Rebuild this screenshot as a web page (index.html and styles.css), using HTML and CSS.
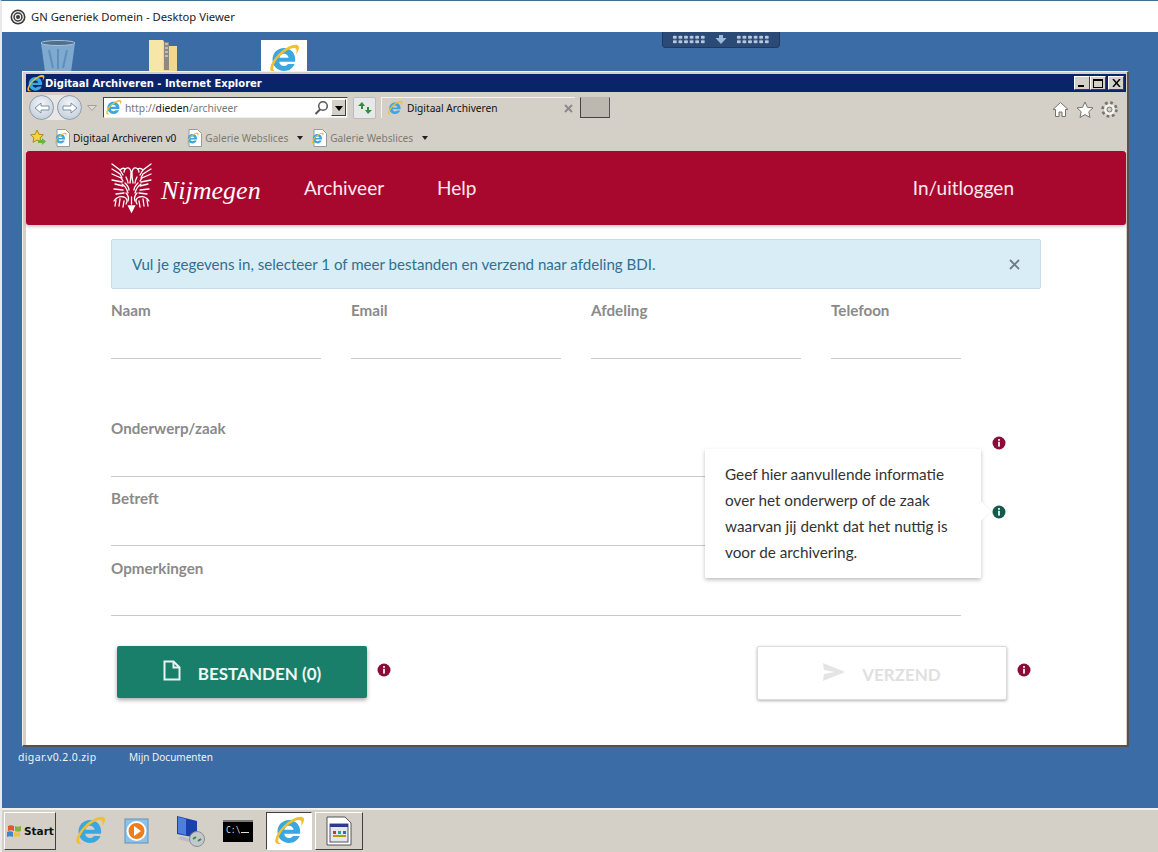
FILE: index.html
```html
<!DOCTYPE html>
<html lang="en">
<head>
    <meta charset="UTF-8">
    <title>GN Generiek Domein - Desktop Viewer</title>
    <link rel="stylesheet" href="styles.css">
</head>
<body>
    <svg class="defs" width="0" height="0">
        <symbol id="ie" viewBox="0 0 32 32">
            <path d="M16 5C9.5 5 4.5 10 4.5 16.500S9.500 28 16 28c5 0 9-2.800 10.500-7h-6.600c-1 1.400-2.300 2-3.900 2-2.600 0-4.600-1.800-4.800-4.300h15.800c.1-.7.200-1.400.2-2.200C27.200 10 22.500 5 16 5zm-4.700 9.800c.4-2.300 2.300-4 4.700-4s4.300 1.700 4.600 4z" fill="#3ba7e0"/>
            <path d="M3 28C0 24 8 10 20 4c5-2.500 9-3 10.500-1 1.300 1.700 0 5-2.500 8.500 .8-3 1-5-.2-6-1.700-1.400-6 0-11 3.500C9 14 4 23 5.500 27c.5 1.200 2 1.500 4 1-2.500 1.500-5 1.500-6.500 0z" fill="#f2bf2e"/>
        </symbol>
        <symbol id="info" viewBox="0 0 14 14">
            <circle cx="7" cy="7" r="6.500" fill="currentColor"/>
            <rect x="6" y="3" width="2" height="1.800" fill="#fff" opacity=".85"/>
            <rect x="6" y="5.800" width="2" height="4.800" fill="#fff" opacity=".85"/>
        </symbol>
        <symbol id="page-e" viewBox="0 0 16 18">
            <path d="M3 .5h8.500L15.500 4.500V17.500H3z" fill="#fff" stroke="#9a9a9a"/>
            <use href="#ie" x="0" y="3" width="13" height="13"/>
        </symbol>
    </svg>

    <header class="viewer-bar">
        <svg class="viewer-logo" width="16" height="16" viewBox="0 0 16 16">
            <circle cx="8" cy="8" r="7.500" fill="#3a3a3a"/>
            <circle cx="8" cy="8" r="5.300" fill="none" stroke="#eee" stroke-width="1.300"/>
            <circle cx="8" cy="8" r="2.600" fill="none" stroke="#eee" stroke-width="1.200"/>
        </svg>
        <span>GN Generiek Domein - Desktop Viewer</span>
    </header>

    <main class="desktop">
        <div class="pin-bar">
            <span class="dots"></span>
            <svg width="12" height="9" viewBox="0 0 12 9"><path d="M4 0h4v3h3.500L6 9 .5 3H4z" fill="#9db8d8"/></svg>
            <span class="dots"></span>
        </div>

        <svg class="desk-icon bin" width="38" height="32" viewBox="0 0 38 32">
            <path d="M2 3C2 .5 36 .5 36 3L32 32H6z" fill="#7fa9cf"/>
            <ellipse cx="19" cy="3" rx="17" ry="2.500" fill="#4f6f8c" stroke="#a8c2da"/>
            <path d="M10 10l4 18M19 9v20M28 10l-4 18" stroke="#5f8fbc" stroke-width="2"/>
        </svg>
        <svg class="desk-icon zip" width="32" height="32" viewBox="0 0 32 32">
            <path d="M2 0h14l4 6h10v26H2z" fill="#f0d98c"/>
            <path d="M2 0h14v32H2z" fill="#f7e6a8"/>
            <rect x="17" y="2" width="5" height="28" fill="#8d8a80"/>
            <path d="M18 4h3M18 8h3M18 12h3M18 16h3" stroke="#eee"/>
        </svg>
        <div class="desk-icon selected"><svg width="32" height="32"><use href="#ie"/></svg></div>
        <span class="desk-label zip-label">digar.v0.2.0.zip</span>
        <span class="desk-label docs-label">Mijn Documenten</span>

        <section class="ie-window">
            <div class="ie-title">
                <svg width="19" height="19"><use href="#ie"/></svg>
                <span>Digitaal Archiveren - Internet Explorer</span>
                <div class="win-buttons">
                    <button class="win-btn"><i class="min"></i></button>
                    <button class="win-btn"><i class="max"></i></button>
                    <button class="win-btn close"><svg width="9" height="8" viewBox="0 0 9 8"><path d="M1 0l7 8M8 0L1 8" stroke="#000" stroke-width="1.500" fill="none"/></svg></button>
                </div>
            </div>

            <div class="ie-nav">
                <div class="nav-circles">
                    <button class="circle"><svg width="16" height="12" viewBox="0 0 16 12"><path d="M1 6l6-5v3h8v4H7v3z" fill="#fff" stroke="#7d8fa3"/></svg></button>
                    <button class="circle"><svg width="16" height="12" viewBox="0 0 16 12"><path d="M15 6L9 1v3H1v4h8v3z" fill="#fff" stroke="#7d8fa3"/></svg></button>
                </div>
                <svg class="nav-drop" width="10" height="6" viewBox="0 0 10 6"><path d="M.5.5h9L5 5.500z" fill="#dedbd5" stroke="#a5a29c"/></svg>
                <div class="address">
                    <svg width="17" height="17"><use href="#ie"/></svg>
                    <span class="url">http://<b>dieden</b>/archiveer</span>
                    <svg class="search" width="15" height="15" viewBox="0 0 15 15"><circle cx="9" cy="6" r="4.300" fill="none" stroke="#555" stroke-width="1.500"/><path d="M6 9.500L1.500 14" stroke="#555" stroke-width="2"/></svg>
                    <span class="addr-drop"></span>
                </div>
                <button class="refresh"><svg width="16" height="14" viewBox="0 0 16 14"><path d="M1 5l4-4 3 4H6v3H4V5zM15 9l-4 4-3-4h2V6h2v3z" fill="#2f8f3a"/></svg></button>
                <div class="tab">
                    <svg width="16" height="16"><use href="#ie"/></svg>
                    <span>Digitaal Archiveren</span>
                    <svg class="tab-x" width="9" height="9" viewBox="0 0 9 9"><path d="M1 1l7 7M8 1L1 8" stroke="#8b8b8b" stroke-width="2"/></svg>
                </div>
                <div class="new-tab"></div>
                <div class="ie-tools">
                    <svg width="17" height="17" viewBox="0 0 17 17"><path d="M8.500 1.500L1 8.500h2.500V15.500h3.500v-4.500h3v4.500h3.500V8.500H16z" fill="#fff" stroke="#77736d"/></svg>
                    <svg width="18" height="18" viewBox="0 0 18 18"><path d="M9 1l2.400 5.300 5.600.6-4.200 3.800 1.200 5.800L9 13.600l-5 2.900 1.200-5.800L1 6.900l5.600-.6z" fill="#fff" stroke="#77736d"/></svg>
                    <svg width="17" height="17" viewBox="0 0 17 17"><circle cx="8.500" cy="8.500" r="6.500" fill="none" stroke="#77736d" stroke-width="3.500" stroke-dasharray="2.500 2.600"/><circle cx="8.500" cy="8.500" r="5.500" fill="#f4f3f0"/><circle cx="8.500" cy="8.500" r="2.500" fill="#d4d0c8" stroke="#77736d"/></svg>
                </div>
            </div>

            <div class="ie-favs">
                <svg class="fav-star" width="17" height="17" viewBox="0 0 17 17"><path d="M7 1l1.900 4.300 4.500.5-3.300 3 .9 4.500L7 11 3 13.300l.9-4.500-3.300-3 4.500-.5z" fill="#f5d442" stroke="#b08a1a"/><path d="M8 11h4V9l4 3.500-4 3.500v-2H8z" fill="#63b83b"/></svg>
                <a class="fav"><svg width="16" height="18"><use href="#page-e"/></svg>Digitaal Archiveren v0</a>
                <a class="fav muted"><svg width="16" height="18"><use href="#page-e"/></svg>Galerie Webslices<i class="caret"></i></a>
                <a class="fav muted"><svg width="16" height="18"><use href="#page-e"/></svg>Galerie Webslices<i class="caret"></i></a>
            </div>

            <div class="page">
                <nav class="site-nav">
                    <div class="brand">
                        <svg width="41" height="50" viewBox="0 0 41 50" fill="none" stroke="#fff" stroke-width="1.300" stroke-linecap="round">
                            <path d="M20.500 49l-3-6h6z" fill="#fff"/>
                            <path d="M20.500 41V34M17 38c1-3 0-6-2-8M24 38c-1-3 0-6 2-8"/>
                            <path d="M13 9c1-5 6-6 7 0 0 3 0 7-1 11M28 9c-1-5-6-6-7 0 0 3 0 7 1 11"/>
                            <path d="M9 7c2-2 4-2 5-1M32 7c-2-2-4-2-5-1M15 14c1 2 2 4 2 6M26 14c-1 2-2 4-2 6"/>
                            <path d="M1 1l8 6 3 5M1 6l8 5 2 4M1 11l9 4 2 3M1 17l10 2M40 1l-8 6-3 5M40 6l-8 5-2 4M40 11l-9 4-2 3M40 17l-10 2"/>
                            <path d="M4 21l8 2M3 26l9 1M5 31l8-1M37 21l-8 2M38 26l-9 1M36 31l-8-1"/>
                            <path d="M11 21c3 2 5 5 6 9M14 20c2 2 4 5 4 7M30 21c-3 2-5 5-6 9M27 20c-2 2-4 5-4 7"/>
                            <path d="M3 38c2-3 6-5 10-4 3 1 4 4 2 7M38 38c-2-3-6-5-10-4-3 1-4 4-2 7"/>
                            <path d="M5 37l-1 6M9 36l-1 7M13 38l-1 6M36 37l1 6M32 36l1 7M28 38l1 6"/>
                        </svg>
                        <span class="brand-name">Nijmegen</span>
                    </div>
                    <a class="nav-link">Archiveer</a>
                    <a class="nav-link">Help</a>
                    <a class="nav-link login">In/uitloggen</a>
                </nav>

                <div class="content">
                    <div class="alert">
                        <span>Vul je gegevens in, selecteer 1 of meer bestanden en verzend naar afdeling BDI.</span>
                        <svg width="11" height="11" viewBox="0 0 11 11"><path d="M1 1l9 9M10 1l-9 9" stroke="#6d7d86" stroke-width="1.800"/></svg>
                    </div>

                    <div class="field-row">
                        <label class="field">Naam</label>
                        <label class="field">Email</label>
                        <label class="field">Afdeling</label>
                        <label class="field short">Telefoon</label>
                    </div>

                    <div class="wide-fields">
                        <label class="field wide first">Onderwerp/zaak
                            <svg class="dot"><use href="#info"/></svg>
                        </label>
                        <label class="field wide second">Betreft
                            <svg class="dot active"><use href="#info"/></svg>
                            <div class="tooltip">Geef hier aanvullende informatie over het onderwerp of de zaak waarvan jij denkt dat het nuttig is voor de archivering.</div>
                        </label>
                        <label class="field wide third">Opmerkingen</label>
                    </div>

                    <div class="actions">
                        <button class="btn primary">
                            <svg width="18" height="21" viewBox="0 0 18 21" fill="none" stroke="#e6f5f0" stroke-width="2"><path d="M1.500 1.500h9l6 6v12h-15z"/><path d="M10.500 1.500v6h6"/></svg>
                            BESTANDEN (0)
                        </button>
                        <svg class="btn-dot"><use href="#info"/></svg>
                        <button class="btn disabled">
                            <svg width="22" height="18" viewBox="0 0 22 18"><path d="M0 0l22 9L0 18l1-7 11-2-11-2z" fill="#e4e4e4"/></svg>
                            VERZEND
                        </button>
                        <svg class="btn-dot"><use href="#info"/></svg>
                    </div>
                </div>
            </div>
        </section>
    </main>

    <footer class="taskbar">
        <button class="start">
            <svg width="16" height="15" viewBox="0 0 16 15"><path d="M1 2c2-1 4-1 6 0v5c-2-1-4-1-6 0z" fill="#e2572c"/><path d="M8 2c2 1 4 1 6 0v5c-2 1-4 1-6 0z" fill="#7db53a"/><path d="M0 8c2-1 4-1 6 0v5c-2-1-4-1-6 0z" fill="#3a86d0"/><path d="M7 8c2 1 4 1 6 0v5c-2-1-4-1-6 0z" fill="#f1c232"/></svg>
            Start
        </button>
        <div class="tray-icons">
            <div class="task"><svg width="32" height="32"><use href="#ie"/></svg></div>
            <div class="task">
                <svg width="28" height="28" viewBox="0 0 28 28"><rect x="1" y="2" width="23" height="24" fill="#8fc1e6" stroke="#5c93bf"/><circle cx="12.500" cy="14" r="9" fill="#ef7d1a" stroke="#fff" stroke-width="2"/><path d="M10 9l7 5-7 5z" fill="#fff"/></svg>
            </div>
            <div class="task shifted">
                <svg width="32" height="32" viewBox="0 0 32 32"><path d="M3 1l20 5v17L3 19z" fill="#1c3fae"/><path d="M4 2l8 2v16l-8-2z" fill="#4d7fe0"/><path d="M7 21l12 4-4 2-11-3z" fill="#b8bcc6"/><circle cx="23" cy="24" r="7.500" fill="#c4c8cc" stroke="#8a8d92"/><path d="M19 24l3-2M27 24l-3 2" stroke="#2f8f3a" stroke-width="2"/></svg>
            </div>
            <div class="task">
                <div class="cmd">C:\<i></i></div>
            </div>
            <div class="task active"><svg width="32" height="32"><use href="#ie"/></svg></div>
            <div class="task raised">
                <svg width="26" height="30" viewBox="0 0 26 30"><path d="M1 1h18l6 6v22H1z" fill="#fff" stroke="#555"/><rect x="4" y="8" width="18" height="18" fill="#e6e6ee" stroke="#556"/><rect x="4" y="8" width="18" height="3" fill="#2c3a8c"/><path d="M7 15h3v3H7z" fill="#c33"/><path d="M12 15h3v3h-3z" fill="#2a8"/><path d="M17 15h3v3h-3z" fill="#36c"/><path d="M7 20h13" stroke="#b90" stroke-width="2"/></svg>
            </div>
        </div>
    </footer>
</body>
</html>
```
FILE: styles.css
```css
* {
    box-sizing: border-box;
}
html, body {
    height: 100%;
}
body {
    margin: 0;
    width: 1158px;
    height: 852px;
    overflow: hidden;
    display: flex;
    flex-direction: column;
    background: #3b6ca5;
    border-top: 1px solid #3d7391;
    border-left: 2px solid #e9e9e9;
    font-family: "DejaVu Sans", sans-serif;
}
button {
    font-family: inherit;
    padding: 0;
}
.defs {
    position: absolute;
}

/* Viewer bar */
.viewer-bar {
    height: 31px;
    flex: none;
    background: #fff;
    display: flex;
    align-items: center;
    gap: 5px;
    padding: 0 0 0 8px;
    font-family: "Noto Sans", sans-serif;
    font-size: 11.25px;
    color: #222;
}
.viewer-logo {
    flex: none;
}

/* Desktop */
.desktop {
    position: relative;
    flex: 1;
}
.pin-bar {
    position: absolute;
    left: 660px;
    top: 0;
    width: 118px;
    height: 16px;
    background: #2b4a75;
    border: 1px solid #1f3a60;
    border-top: none;
    border-radius: 0 0 4px 4px;
    display: flex;
    align-items: center;
    justify-content: center;
    gap: 9px;
}
.dots {
    width: 34px;
    height: 9px;
    background-image: radial-gradient(circle, #b9c9dd 1.7px, transparent 1.9px);
    background-size: 5.6px 4.5px;
}
.desk-icon {
    position: absolute;
    top: 8px;
}
.bin {
    left: 37px;
}
.zip {
    left: 145px;
}
.selected {
    left: 259px;
    width: 46px;
    height: 34px;
    background: #fff;
    display: flex;
    justify-content: center;
    padding-top: 3px;
}
.desk-label {
    position: absolute;
    top: 718px;
    font-family: "Noto Sans", sans-serif;
    font-size: 10px;
    color: #f0f4f8;
}
.zip-label {
    left: 16px;
    font-size: 10.5px;
    letter-spacing: 0.35px;
}
.docs-label {
    left: 127px;
}

/* IE window */
.ie-window {
    position: absolute;
    left: 20px;
    top: 39px;
    width: 1107px;
    height: 676px;
    background: #d4d0c8;
    border-top: 1px solid #f2f0ec;
    border-left: 1px solid #f2f0ec;
    border-right: 2px solid #55534f;
    border-bottom: 2px solid #55534f;
    padding: 2px 1px 0 3px;
    display: flex;
    flex-direction: column;
}
.ie-title {
    height: 18px;
    flex: none;
    background: #0a246a;
    color: #fff;
    display: flex;
    align-items: center;
    font-size: 10px;
    font-weight: bold;
}
.ie-title svg {
    flex: none;
}
.win-buttons {
    margin-left: auto;
    display: flex;
    padding-right: 2px;
}
.win-btn {
    width: 16px;
    height: 14px;
    background: #d4d0c8;
    border: 1px solid;
    border-color: #fff #404040 #404040 #fff;
    display: flex;
    align-items: center;
    justify-content: center;
    position: relative;
}
.win-btn.close {
    margin-left: 2px;
}
.min {
    position: absolute;
    left: 3px;
    bottom: 2px;
    width: 6px;
    height: 2px;
    background: #000;
}
.max {
    width: 10px;
    height: 9px;
    border: 1px solid #000;
    border-top-width: 2px;
}

.ie-nav {
    height: 31px;
    flex: none;
    display: flex;
    align-items: center;
    padding-left: 3px;
}
.nav-circles {
    display: flex;
    gap: 3px;
    background: #e9e7e3;
    border-radius: 14px;
}
.circle {
    width: 25px;
    height: 25px;
    border-radius: 50%;
    background: radial-gradient(circle at 50% 35%, #f4f6f9, #b9c6d6);
    border: 1px solid #8d98a6;
    display: flex;
    align-items: center;
    justify-content: center;
}
.nav-drop {
    margin: 0 6px 0 5px;
}
.address {
    width: 245px;
    height: 21px;
    background: #fff;
    border: 1px solid #444;
    border-right-color: #ddd;
    border-bottom-color: #eee;
    display: flex;
    align-items: center;
    padding-left: 1px;
    gap: 3px;
    font-family: "Noto Sans", sans-serif;
    font-size: 10.3px;
    color: #777;
}
.url b {
    font-weight: normal;
    color: #111;
}
.search {
    margin-left: auto;
    margin-right: -1px;
}
.addr-drop {
    width: 15px;
    height: 17px;
    background: #d4d0c8;
    border: 1px solid;
    border-color: #fff #404040 #404040 #fff;
    position: relative;
    margin-right: 1px;
}
.addr-drop::after {
    content: "";
    position: absolute;
    left: 3px;
    top: 6px;
    border: 4px solid transparent;
    border-top: 5px solid #000;
    border-bottom: none;
}
.refresh {
    width: 23px;
    height: 22px;
    margin-left: 5px;
    background: #e6e8ea;
    border: 1px solid #bcbcbc;
    border-radius: 2px;
    display: flex;
    align-items: center;
    justify-content: center;
}
.tab {
    width: 194px;
    height: 21px;
    margin-left: 5px;
    border-top: 1px solid #f4f3f0;
    border-left: 1px solid #f4f3f0;
    display: flex;
    align-items: center;
    gap: 4px;
    padding-left: 5px;
    font-family: "Noto Sans", sans-serif;
    font-size: 10.2px;
    color: #111;
}
.tab-x {
    margin-left: auto;
    margin-right: 2px;
}
.new-tab {
    width: 30px;
    height: 21px;
    margin-left: 5px;
    background: #bcb8b0;
    border: 1px solid;
    border-color: #bcb8b0 #555 #444 #444;
}
.ie-tools {
    margin-left: auto;
    display: flex;
    gap: 7px;
    padding-right: 8px;
    padding-top: 4px;
    align-items: center;
}

.ie-favs {
    height: 28px;
    flex: none;
    display: flex;
    align-items: center;
    padding: 1px 0 0 4px;
    font-family: "Noto Sans", sans-serif;
    font-size: 10.1px;
    color: #111;
}
.fav-star {
    margin-right: 7px;
}
.fav {
    display: flex;
    align-items: center;
    gap: 3px;
    margin-right: 10px;
}
.fav.muted {
    color: #7d7a75;
    margin-right: 8px;
}
.caret {
    margin-left: 6px;
    border: 3px solid transparent;
    border-top: 4px solid #222;
    border-bottom: none;
}

/* Page inside the browser */
.page {
    flex: 1;
    background: #fff;
    font-family: "Lato", sans-serif;
}
.site-nav {
    height: 74px;
    background: #a8082e;
    border-radius: 3px;
    box-shadow: 0 2px 3px rgba(0, 0, 0, 0.2);
    display: flex;
    align-items: center;
    padding: 0 0 2px 85px;
    color: #fce8ee;
    font-size: 19px;
}
.brand {
    display: flex;
    align-items: center;
    gap: 9px;
    width: 193px;
    padding-top: 2px;
}
.brand-name {
    font-family: "Liberation Serif", serif;
    font-style: italic;
    font-size: 26px;
    color: #fff;
    margin-top: 6px;
}
.nav-link {
    margin-right: 53px;
}
.login {
    margin-left: auto;
    margin-right: 112px;
}

.content {
    padding: 14px 0 0 85px;
    width: 1015px;
}
.alert {
    height: 50px;
    background: #d9edf7;
    border: 1px solid #c2dfe9;
    border-radius: 2px;
    display: flex;
    align-items: center;
    justify-content: space-between;
    padding: 0 20px;
    color: #31708f;
    font-size: 15.1px;
}
.field-row {
    display: flex;
    gap: 30px;
    margin-top: 12px;
}
.field {
    width: 210px;
    height: 58px;
    border-bottom: 1px solid #c9c9c9;
    font-size: 15.2px;
    font-weight: bold;
    color: #8a8a8a;
    display: block;
    position: relative;
}
.field.short {
    width: 130px;
}
.wide-fields {
    width: 850px;
    margin-top: 60px;
}
.field.wide {
    width: 850px;
}
.field.second {
    margin-top: 12px;
    height: 57px;
}
.field.third {
    margin-top: 13px;
    height: 57px;
}
.dot {
    position: absolute;
    left: 881px;
    top: 5px;
    width: 14px;
    height: 14px;
    color: #8c0b39;
}
.first .dot {
    top: 17px;
}
.dot.active {
    color: #155a4b;
    top: 16px;
}
.tooltip {
    position: absolute;
    left: 594px;
    top: -40px;
    width: 276px;
    height: 129px;
    background: #fff;
    padding: 12px 20px;
    box-shadow: 0 2px 4px rgba(0, 0, 0, 0.25);
    font-size: 15.3px;
    font-weight: normal;
    line-height: 26px;
    color: #333;
}
.tooltip::after {
    content: "";
    position: absolute;
    right: -7px;
    top: 55px;
    width: 14px;
    height: 14px;
    background: #fff;
    transform: rotate(45deg);
    box-shadow: 1px -1px 1px rgba(0, 0, 0, 0.04);
}
.actions {
    display: flex;
    align-items: flex-start;
    margin: 30px 0 0 6px;
}
.btn {
    width: 250px;
    height: 52px;
    border-radius: 2px;
    display: flex;
    align-items: center;
    justify-content: center;
    gap: 17px;
    padding-top: 2px;
    font-family: "Lato", sans-serif;
    font-size: 17px;
    font-weight: bold;
    box-shadow: 0 2px 4px rgba(0, 0, 0, 0.35);
}
.btn svg {
    margin-top: -5px;
}
.primary {
    background: #1a7f6a;
    border: none;
    color: #eef8f5;
}
.disabled {
    height: 54px;
    margin-left: 366px;
    background: #fff;
    border: 1px solid #dcdcdc;
    color: #e0e0e0;
    box-shadow: 0 1px 3px rgba(0, 0, 0, 0.3);
}
.btn-dot {
    width: 14px;
    height: 14px;
    margin: 17px 0 0 10px;
    color: #8c0b39;
}

/* Taskbar */
.taskbar {
    height: 44px;
    flex: none;
    background: #d4d0c8;
    border-top: 2px solid #f2f0ec;
    margin-top: auto;
    display: flex;
    align-items: flex-start;
    padding: 2px 0 0 2px;
}
.start {
    width: 52px;
    height: 38px;
    background: #d4d0c8;
    border: 1px solid;
    border-color: #fff #404040 #404040 #fff;
    display: flex;
    align-items: center;
    gap: 1px;
    padding-left: 2px;
    font-family: "DejaVu Sans", sans-serif;
    font-weight: bold;
    font-size: 10.5px;
    color: #111;
}
.tray-icons {
    display: flex;
    margin-left: 10px;
}
.task {
    width: 48px;
    height: 38px;
    display: flex;
    align-items: center;
    justify-content: center;
}
.task.shifted {
    margin-left: 4px;
}
.task.active {
    width: 46px;
    margin-left: 4px;
    background: #fff;
    border: 1px solid;
    border-color: #404040 #fff #fff #404040;
}
.task.raised {
    margin-left: 3px;
    border: 1px solid;
    border-color: #fff #404040 #404040 #fff;
}
.cmd {
    width: 30px;
    height: 22px;
    background: #000;
    color: #ddd;
    font-family: "DejaVu Sans Mono", monospace;
    font-size: 8px;
    padding: 4px 0 0 3px;
    border-top: 2px solid #777;
}
.cmd i {
    display: inline-block;
    width: 8px;
    height: 1px;
    margin-left: 1px;
    background: #ddd;
}
```
